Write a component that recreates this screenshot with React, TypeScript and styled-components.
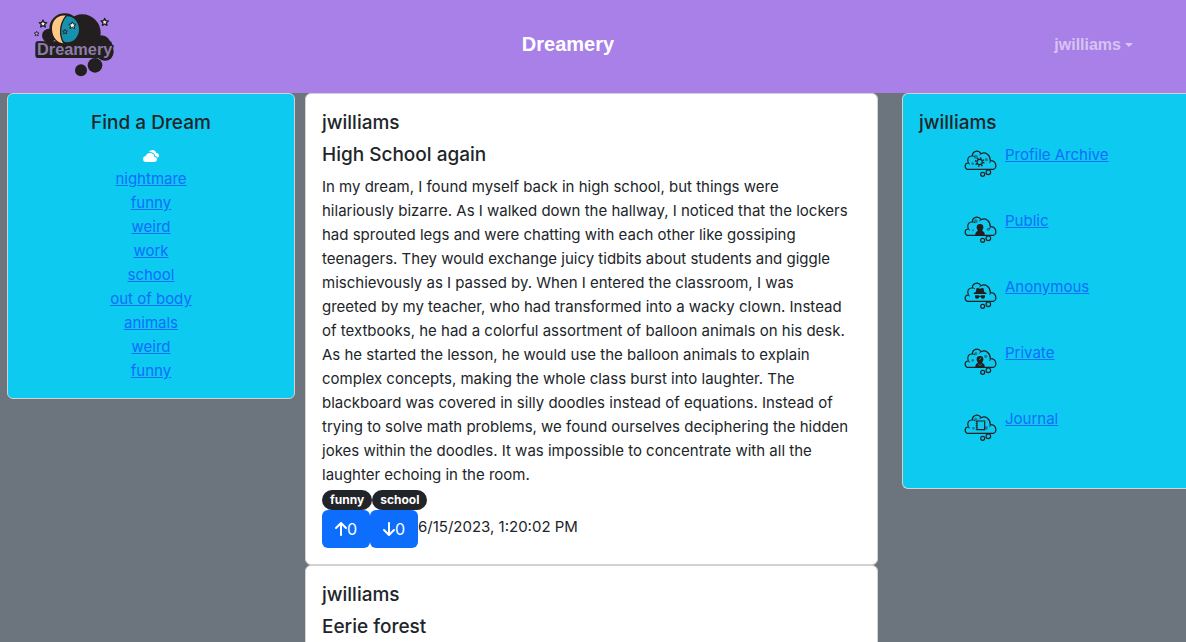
import React from "react";
import styled, { createGlobalStyle } from "styled-components";
import { BsCloudsFill } from "react-icons/bs";
import { FaArrowDown, FaArrowUp } from "react-icons/fa6";

const GlobalStyle = createGlobalStyle`
  *, *::before, *::after { box-sizing: border-box; }
  body {
    margin: 0;
    background: #6c757d;
    color: #212529;
    font-family: Inter, "Liberation Sans", sans-serif;
    font-size: 15px;
    line-height: 24px;
  }
`;

const Page = styled.div`
  height: 100vh;
  overflow: hidden;
`;

const Navbar = styled.header`
  display: grid;
  grid-template-columns: 1fr auto 1fr;
  align-items: center;
  padding: 10px 53px 13px 3px;
  background: #a880e8;
  font-family: "Liberation Sans", Arial, sans-serif;
  font-weight: 700;
`;

const LogoLink = styled.a`
  display: block;
  width: 84px;
  margin-left: 29px;
  svg { display: block; }
`;

const Brand = styled.a`
  padding-bottom: 2px;
  color: #fff;
  font-size: 20px;
  text-decoration: none;
`;

const UserMenu = styled.button`
  justify-self: end;
  display: flex;
  align-items: center;
  gap: 4px;
  padding: 0;
  border: 0;
  background: none;
  color: rgba(255, 255, 255, 0.55);
  font: inherit;
  font-size: 16px;
  &::after {
    content: "";
    border: 4px solid transparent;
    border-top-color: currentColor;
    border-bottom: 0;
  }
`;

const Columns = styled.div`
  display: flex;
  align-items: flex-start;
  padding-left: 7px;
`;

const Feed = styled.main`
  flex: 1;
  min-width: 0;
  margin: 0 24px 0 10px;
`;

const Card = styled.article`
  padding: 17px 16px 15px;
  border: 1px solid #d2d2d2;
  border-radius: 6px;
  background: #fff;
`;

const SidePanel = styled.aside<{ $flush?: boolean }>`
  flex: 0 0 ${(p) => (p.$flush ? "284px" : "288px")};
  padding: 17px 16px 15px;
  border: 1px solid #d2d2d2;
  border-right-width: ${(p) => (p.$flush ? "0" : "1px")};
  border-radius: ${(p) => (p.$flush ? "6px 0 0 6px" : "6px")};
  background: #0dcaf0;
  text-align: ${(p) => (p.$flush ? "left" : "center")};
`;

const Title = styled.h5`
  margin: 0 0 8px;
  font-size: 19px;
  font-weight: 500;
  line-height: 24px;
`;

const Text = styled.p`
  margin: 0;
`;

const TextLink = styled.a`
  color: #0d6efd;
  text-decoration: underline;
`;

const CloudMark = styled.div`
  height: 24px;
  color: #fff;
  font-size: 16px;
  svg { display: block; margin: 0 auto; height: 26px; }
`;

const PlainList = styled.ul`
  margin: 0;
  padding: 0;
  list-style: none;
`;

const MenuItem = styled.li`
  display: flex;
  align-items: flex-start;
  gap: 7px;
  height: 66px;
  padding-left: 45px;
  svg { margin-top: 6px; }
`;

const Badges = styled.div`
  display: flex;
  padding: 3px 0 0;
`;

const Badge = styled.span`
  padding: 0 8px;
  border-radius: 10px;
  background: #212529;
  color: #fff;
  font-size: 12px;
  font-weight: 700;
  line-height: 20px;
`;

const Actions = styled.div`
  display: flex;
  margin-bottom: 1px;
`;

const VoteButton = styled.button`
  display: flex;
  align-items: center;
  justify-content: center;
  width: 48px;
  height: 38px;
  padding: 0;
  border: 0;
  border-radius: 6px;
  background: #0d6efd;
  color: #fff;
  font: inherit;
  font-size: 16px;
  svg { width: 12px; height: 16px; }
`;

const Time = styled.time`
  padding-top: 5px;
`;

const INK = "#231f20";
const STAR = "M0-11 3-4 11-3 5 2 7 10 0 6-7 10-5 2-11-3-3-4Z";

function Logo() {
  return (
    <svg width="84" height="70" viewBox="36 30 252 210" aria-hidden="true">
      <g fill={INK}>
        <circle cx="87" cy="107" r="21" />
        <circle cx="134" cy="86" r="46" />
        <circle cx="187" cy="98" r="55" />
        <circle cx="244" cy="134" r="28" />
        <rect x="46" y="124" width="230" height="50" rx="7" />
        <circle cx="255" cy="156" r="26" />
        <circle cx="183" cy="211" r="18" />
        <circle cx="225" cy="196" r="22" />
      </g>
      <ellipse cx="142" cy="88" rx="35" ry="39" fill="#1792ae" />
      <path d="M139 47C110 43 95 64 96 88C97 113 112 130 132 130C117 108 118 71 139 47Z" fill="#ffc885" />
      <path d="M139 47C118 71 117 108 132 130" fill="none" stroke={INK} strokeWidth="4" />
      <g fill="#e8faf2" stroke={INK} strokeWidth="4" strokeLinejoin="round">
        <path d={STAR} transform="translate(69 71)" />
        <path d={STAR} transform="translate(254 66)" />
        <path d={STAR} transform="translate(157 76)" strokeWidth="3" />
        <path d={STAR} transform="translate(50 101) scale(.65)" fill="#b6acd0" />
        <path d={STAR} transform="translate(135 95) scale(.65)" fill="#1792ae" />
      </g>
      <text x="51" y="166" fontSize="49" fill="#8d7ca8" stroke={INK} strokeWidth="9" strokeLinejoin="round" paintOrder="stroke">
        Dreamery
      </text>
    </svg>
  );
}

type Kind = "gear" | "person" | "spy" | "lock" | "book";

const dots: Record<Kind, [number, number, number][]> = {
  gear: [[35, 23, 6], [67, 32, 5], [26, 44, 4]],
  person: [[35, 19, 6], [73, 43, 5], [27, 46, 3]],
  spy: [],
  lock: [[35, 20, 5], [65, 28, 5], [26, 40, 4]],
  book: [[35, 19, 5], [67, 45, 5], [28, 46, 4]],
};

function ThoughtCloud({ kind }: { kind: Kind }) {
  return (
    <svg width="34" height="30" viewBox="0 0 102 90" fill="none" stroke={INK} strokeWidth="3.500" aria-hidden="true">
      <path d="M9 61C1 57 1 42 13 42C8 29 14 20 25 21C25 6 43 1 51 14C65 7 79 18 79 35C97 34 100 56 89 61Z" strokeLinejoin="round" />
      <path d="M25 21q5-1 8 3M51 14q-4 2-5 5M79 35q0 5-3 7M13 42q2 3 5 4" strokeWidth="2.500" />
      <circle cx="56" cy="76" r="6" />
      <circle cx="73" cy="70" r="7" />
      {dots[kind].map(([x, y, r]) => (
        <circle key={x} cx={x} cy={y} r={r} fill={INK} stroke="none" opacity=".45" />
      ))}
      {kind === "gear" && (
        <g>
          <circle cx="47" cy="39" r="8" />
          <circle cx="47" cy="39" r="12" strokeWidth="5" strokeDasharray="4 5.420" />
        </g>
      )}
      {(kind === "person" || kind === "lock") && (
        <g fill={INK} stroke="none">
          <circle cx="48" cy="37" r="10" />
          <path d="M34 60V56Q35 50 41 48V42H55V48Q62 50 62 56V60Z" />
          {kind === "lock" && <path d="M45 38l7-5M43 51l5 5 5-5" stroke="#0dcaf0" strokeWidth="2" />}
        </g>
      )}
      {kind === "spy" && (
        <g fill={INK} stroke="none">
          <path d="M35 33 38 21Q42 20 48 23Q54 20 58 21L61 33L68 36V39H29V36Z" />
          <path d="M33 43H46V46H50V43H63V48Q62 53 57 53Q51 53 50 48H46Q45 53 39 53Q33 53 33 48Z" />
        </g>
      )}
      {kind === "book" && (
        <g>
          <path d="M39 24H62V50H39Z" />
          <path d="M37 24V50" strokeDasharray="3 3" />
        </g>
      )}
    </svg>
  );
}

const tags = ["nightmare", "funny", "weird", "work", "school", "out of body", "animals", "weird", "funny"];

const menu: { label: string; kind: Kind }[] = [
  { label: "Profile Archive", kind: "gear" },
  { label: "Public", kind: "person" },
  { label: "Anonymous", kind: "spy" },
  { label: "Private", kind: "lock" },
  { label: "Journal", kind: "book" },
];

const dream = [
  "In my dream, I found myself back in high school, but things were",
  "hilariously bizarre. As I walked down the hallway, I noticed that the lockers",
  "had sprouted legs and were chatting with each other like gossiping",
  "teenagers. They would exchange juicy tidbits about students and giggle",
  "mischievously as I passed by. When I entered the classroom, I was",
  "greeted by my teacher, who had transformed into a wacky clown. Instead",
  "of textbooks, he had a colorful assortment of balloon animals on his desk.",
  "As he started the lesson, he would use the balloon animals to explain",
  "complex concepts, making the whole class burst into laughter. The",
  "blackboard was covered in silly doodles instead of equations. Instead of",
  "trying to solve math problems, we found ourselves deciphering the hidden",
  "jokes within the doodles. It was impossible to concentrate with all the",
  "laughter echoing in the room.",
];

export default function App() {
  return (
    <Page>
      <GlobalStyle />
      <Navbar>
        <LogoLink href="#">
          <Logo />
        </LogoLink>
        <Brand href="#">Dreamery</Brand>
        <UserMenu type="button">jwilliams</UserMenu>
      </Navbar>
      <Columns>
        <SidePanel>
          <Title>Find a Dream</Title>
          <CloudMark>
            <BsCloudsFill />
          </CloudMark>
          <PlainList>
            {tags.map((tag, i) => (
              <li key={i}>
                <TextLink href="#">{tag}</TextLink>
              </li>
            ))}
          </PlainList>
        </SidePanel>
        <Feed>
          <Card>
            <Title>jwilliams</Title>
            <Title>High School again</Title>
            <Text>
              {dream.map((line) => (
                <React.Fragment key={line}>
                  {line}
                  <br />
                </React.Fragment>
              ))}
            </Text>
            <Badges>
              <Badge>funny</Badge>
              <Badge>school</Badge>
            </Badges>
            <Actions>
              <VoteButton type="button" aria-label="Upvote">
                <FaArrowUp />0
              </VoteButton>
              <VoteButton type="button" aria-label="Downvote">
                <FaArrowDown />0
              </VoteButton>
              <Time>6/15/2023, 1:20:02 PM</Time>
            </Actions>
          </Card>
          <Card>
            <Title>jwilliams</Title>
            <Title>Eerie forest</Title>
          </Card>
        </Feed>
        <SidePanel $flush>
          <Title>jwilliams</Title>
          <PlainList>
            {menu.map(({ label, kind }) => (
              <MenuItem key={label}>
                <ThoughtCloud kind={kind} />
                <TextLink href="#">{label}</TextLink>
              </MenuItem>
            ))}
          </PlainList>
        </SidePanel>
      </Columns>
    </Page>
  );
}
